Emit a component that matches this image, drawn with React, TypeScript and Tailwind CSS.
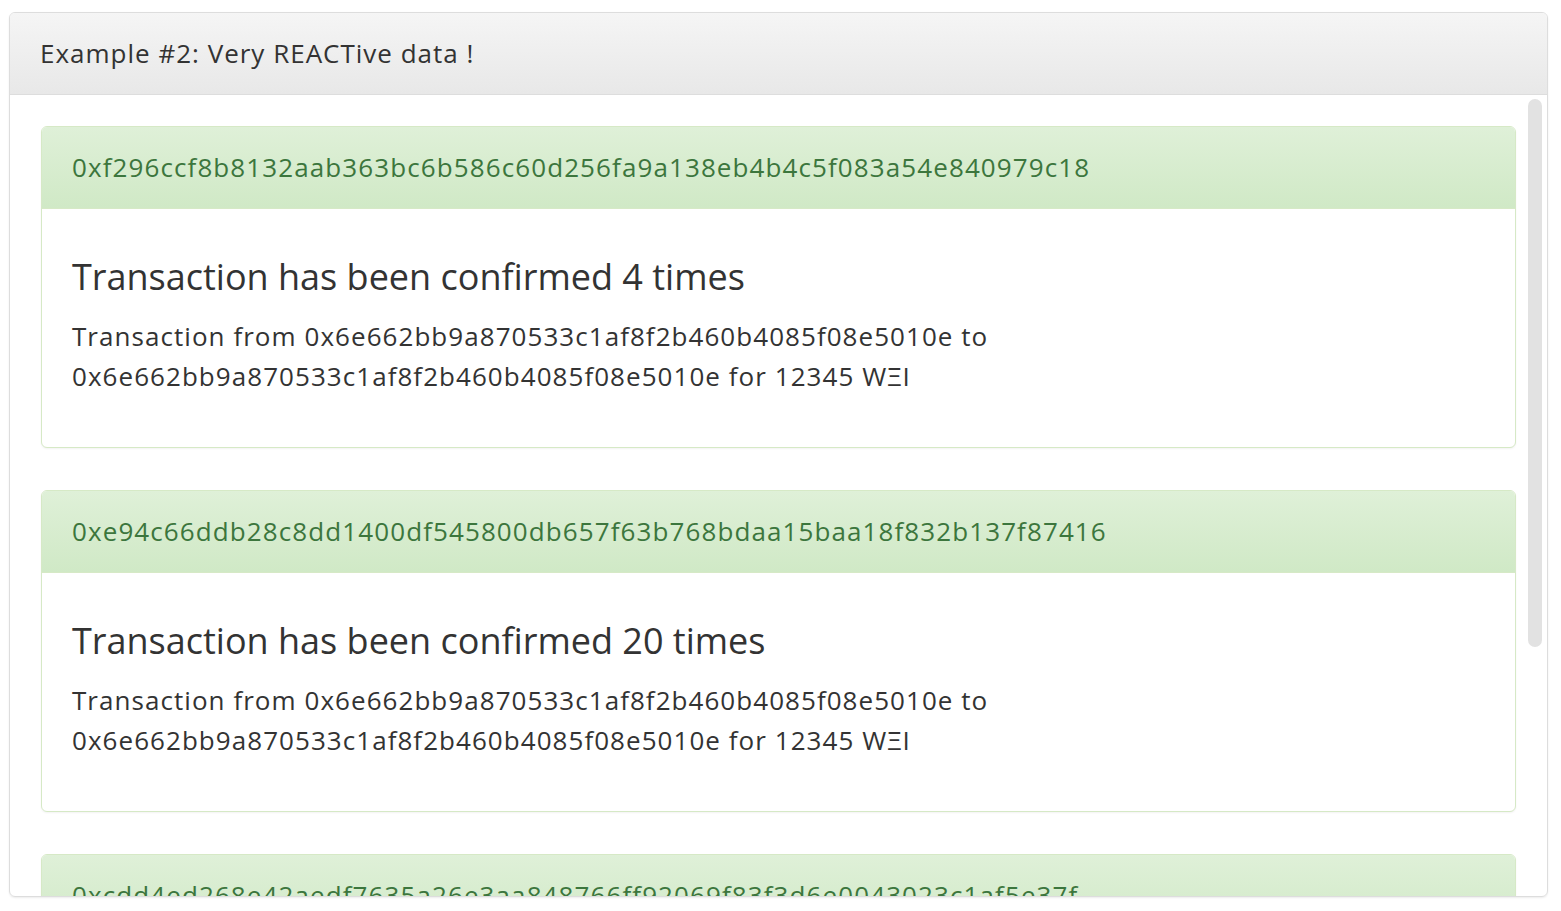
const from = "0x6e662bb9a870533c1af8f2b460b4085f08e5010e";

const txs = [
  { hash: "0xf296ccf8b8132aab363bc6b586c60d256fa9a138eb4b4c5f083a54e840979c18", confirmations: 4 },
  { hash: "0xe94c66ddb28c8dd1400df545800db657f63b768bdaa15baa18f832b137f87416", confirmations: 20 },
  { hash: "0xcdd4ed268e42aedf7635a26e3aa848766ff92069f83f3d6e0043023c1af5e37f", confirmations: 31 },
];

function TxPanel({ hash, confirmations }: { hash: string; confirmations: number }) {
  return (
    <div className="mb-[42px] rounded-[6px] border border-[#d6e9c6] bg-white shadow-[0_1px_2px_rgba(0,0,0,0.05)]">
      <div className="flex h-[82px] items-center rounded-t-[5px] border-b border-[#d6e9c6] bg-gradient-to-b from-[#dff0d8] to-[#d0e9c6] px-[30px] text-[26px] tracking-[1.1px] text-[#3c763d]">
        {hash}
      </div>
      <div className="px-[30px] pb-[32px] pt-[48px] text-[#333]">
        <h3 className="mb-[19px] text-[36px] leading-[40px]">Transaction has been confirmed {confirmations} times</h3>
        <p className="mb-[19px] max-w-[1000px] text-[26px] leading-[40px] tracking-[1.05px]">
          Transaction from {from} to {from} for 12345 WΞI
        </p>
      </div>
    </div>
  );
}

export default function App() {
  return (
    <div className="h-[911px] w-full bg-white pl-[9px] pr-[14px] pt-[12px] font-['Open_Sans',sans-serif]">
      <div className="relative flex h-[885px] w-[1539px] flex-col overflow-hidden rounded-[6px] border border-[#dddddd] shadow-[0_1px_2px_rgba(0,0,0,0.08)]">
        <div className="flex h-[82px] shrink-0 items-center border-b border-[#dddddd] bg-gradient-to-b from-[#f5f5f5] to-[#e8e8e8] px-[30px] text-[26px] tracking-[1px] text-[#333]">
          Example #2: Very REACTive data !
        </div>
        <div className="flex-1 overflow-hidden px-[31px] pt-[31px]">
          {txs.map((tx) => (
            <TxPanel key={tx.hash} hash={tx.hash} confirmations={tx.confirmations} />
          ))}
        </div>
        <div className="absolute left-[1518px] top-[86px] h-[548px] w-[14px] rounded-full bg-[#e2e2e2]" />
      </div>
    </div>
  );
}
